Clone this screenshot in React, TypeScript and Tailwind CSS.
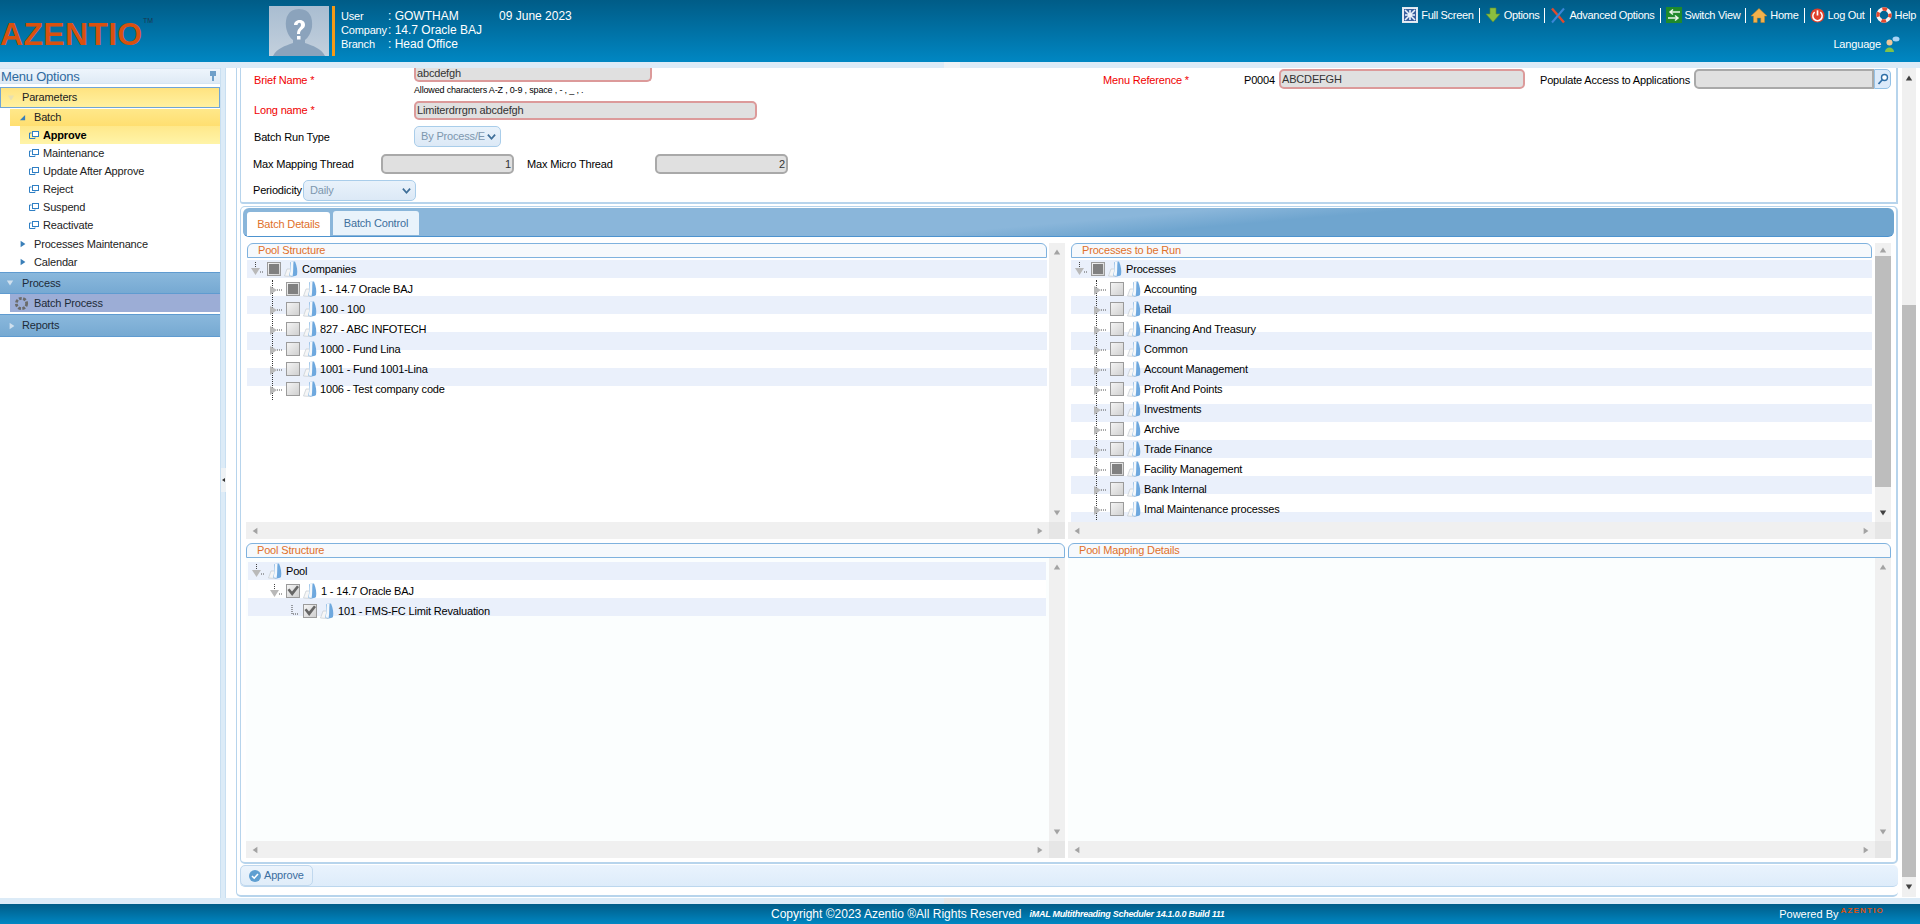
import React from "react";

const FONT = "font-['Liberation_Sans',Arial,sans-serif] tracking-[-0.17px]";
const STRIPES =
  "bg-[repeating-linear-gradient(to_bottom,#eaf0fb_0px,#eaf0fb_18px,#ffffff_18px,#ffffff_36px)]";

function Triangle({ dir, className }: { dir: "down" | "right" | "up" | "left"; className: string }) {
  const pts = {
    down: "1,2 9,2 5,8",
    right: "2,1 8,5 2,9",
    up: "1,8 9,8 5,2",
    left: "8,1 2,5 8,9",
  }[dir];
  return (
    <svg viewBox="0 0 10 10" className={className}>
      <polygon points={pts} fill="currentColor" />
    </svg>
  );
}

function DocIcon() {
  return (
    <svg viewBox="0 0 14 16" className="h-[16px] w-[14px] shrink-0">
      <path d="M0.5 15 L3 8 L8 8 L8 15.5 Z" fill="#f6f6f6" stroke="#c4ccd3" strokeWidth="0.7" />
      <path d="M5 14.5 C7 10 5.5 5 6.5 1 L11 0.5 C13 5 13.8 10 13 14 C10.5 15.8 7.5 15.8 5 14.5 Z" fill="#6ea8de" />
      <path d="M5.5 14.5 C7 10 6 5 7 1 L9.5 0.8 C9 6 9.5 11 8.6 15 Z" fill="#f4f8fc" />
    </svg>
  );
}

function CheckBox({ state }: { state: "none" | "partial" | "checked" }) {
  return (
    <span className="flex h-[14px] w-[14px] shrink-0 items-center justify-center border border-[#9b9b9b] bg-gradient-to-br from-[#f4f4f4] to-[#d0d0d0]">
      {state === "partial" && <span className="h-[10px] w-[10px] bg-[#808080]" />}
      {state === "checked" && (
        <svg viewBox="0 0 12 12" className="h-[12px] w-[12px]">
          <path d="M0.5 5 L2.5 3.5 L5 6.5 L10 0.5 L12 2 L5.2 11 Z" fill="#666666" />
        </svg>
      )}
    </span>
  );
}

function Expander({ open }: { open?: boolean }) {
  return (
    <svg viewBox="0 0 14 16" className="h-[16px] w-[14px] shrink-0">
      {open ? (
        <>
          <path d="M5.5 1 V8" stroke="#444" strokeWidth="1" strokeDasharray="1 1" />
          <polygon points="1,7 10,7 5.5,14" fill="#b9b9b9" />
          <path d="M10 11 H13" stroke="#555" strokeWidth="1" strokeDasharray="1 1" />
        </>
      ) : (
        <>
          <polygon points="1,5 8,9 1,14" fill="#b9b9b9" />
          <path d="M8 9 H13" stroke="#555" strokeWidth="1" strokeDasharray="1 1" />
        </>
      )}
    </svg>
  );
}

interface TreeRow {
  label: string;
  check?: "none" | "partial" | "checked";
}

function Tree({ root, rows, bandHeight }: { root: string; rows: TreeRow[]; bandHeight: string }) {
  return (
    <div className="min-h-0 flex-1 overflow-hidden text-[11px] text-black">
      <div className={`${STRIPES} ${bandHeight}`}>
        <div className="flex h-[20px] items-center gap-[3px] pb-[2px] pl-[3px] leading-none">
          <Expander open />
          <CheckBox state="partial" />
          <DocIcon />
          <span className="ml-px">{root}</span>
        </div>
        <div className="ml-[25px] border-l border-dotted border-[#333]">
          {rows.map((r) => (
            <div key={r.label} className="-ml-[4px] flex h-[20px] items-center gap-[3px] pb-[2px] leading-none">
              <Expander />
              <CheckBox state={r.check ?? "none"} />
              <DocIcon />
              <span className="whitespace-nowrap">{r.label}</span>
            </div>
          ))}
        </div>
      </div>
    </div>
  );
}

function PoolTree() {
  return (
    <div className={`h-[54px] ${STRIPES} text-[11px] text-black`}>
      <div className="flex h-[20px] items-center gap-[3px] pb-[2px] pl-[3px] leading-none">
        <Expander open />
        <DocIcon />
        <span className="ml-[1px]">Pool</span>
      </div>
      <div className="flex h-[20px] items-center gap-[3px] pb-[2px] pl-[21px] leading-none">
        <Expander open />
        <CheckBox state="checked" />
        <DocIcon />
        <span className="ml-[1px]">1 - 14.7 Oracle BAJ</span>
      </div>
      <div className="flex h-[20px] items-center gap-[3px] pb-[2px] pl-[43px] leading-none">
        <svg viewBox="0 0 9 14" className="h-[14px] w-[9px] shrink-0">
          <path d="M1 1 V10 H7" fill="none" stroke="#444" strokeWidth="1" strokeDasharray="1 1" />
        </svg>
        <CheckBox state="checked" />
        <DocIcon />
        <span className="ml-[1px] whitespace-nowrap">101 - FMS-FC Limit Revaluation</span>
      </div>
    </div>
  );
}

function Legend({ title, className }: { title: string; className?: string }) {
  return (
    <div className={`flex h-[15px] shrink-0 items-center rounded-t-[6px] border border-[#7fb2de] bg-[#f6f9fc] pl-[10px] text-[11px] leading-none text-[#e0702a] ${className ?? ""}`}>
      {title}
    </div>
  );
}

function VScroll() {
  return (
    <div className="flex h-full w-[16px] shrink-0 flex-col items-center justify-between bg-[#f0f0f0] py-[5px]">
      <Triangle dir="up" className="h-[8px] w-[8px] text-[#a3a3a3]" />
      <Triangle dir="down" className="h-[8px] w-[8px] text-[#a3a3a3]" />
    </div>
  );
}

function HScroll() {
  return (
    <div className="flex h-[17px] shrink-0">
      <div className="flex flex-1 items-center justify-between bg-[#f0f0f0] px-[5px]">
        <Triangle dir="left" className="h-[8px] w-[8px] text-[#a3a3a3]" />
        <Triangle dir="right" className="h-[8px] w-[8px] text-[#a3a3a3]" />
      </div>
      <div className="w-[16px] bg-[#e6e6e6]" />
    </div>
  );
}

function Field({ value, className, invalid, align }: { value?: string; className: string; invalid?: boolean; align?: string }) {
  return (
    <div
      className={`flex shrink-0 items-center overflow-hidden rounded-[5px] border-2 bg-[#e0e0e0] px-[1px] text-[11px] leading-none text-[#333] ${
        invalid ? "border-[#dc9a9a]" : "border-[#a9a9a9]"
      } ${align ?? ""} ${className}`}
    >
      {value}
    </div>
  );
}

function SelectBox({ value, className }: { value: string; className: string }) {
  return (
    <div className={`flex shrink-0 items-center justify-between rounded-[5px] border border-[#a9cdea] bg-gradient-to-b from-[#e9f2fb] to-[#dce9f6] pl-[6px] pr-[4px] text-[11px] leading-none text-[#7d97ae] ${className}`}>
      <span className="overflow-hidden whitespace-nowrap">{value}</span>
      <svg viewBox="0 0 10 10" className="h-[9px] w-[9px] shrink-0">
        <path d="M1 3 L5 7.5 L9 3" fill="none" stroke="#3f6f99" strokeWidth="2" />
      </svg>
    </div>
  );
}

function WinIcon() {
  return (
    <svg viewBox="0 0 10 10" className="h-[10px] w-[10px] shrink-0">
      <rect x="3.5" y="1.5" width="6" height="5" fill="#fff" stroke="#2f7fc4" />
      <path d="M2.5 3 H0.5 V8.5 H6 V7.5" fill="none" stroke="#2f7fc4" />
    </svg>
  );
}

function MenuLeaf({ label, active }: { label: string; active?: boolean }) {
  return (
    <div
      className={`ml-[20px] flex h-[18px] items-center gap-[4px] pl-[9px] text-[11px] leading-none ${
        active ? "bg-gradient-to-b from-[#ffe88a] to-[#fff4a8] font-bold text-black" : "text-[#222]"
      }`}
    >
      <WinIcon />
      {label}
    </div>
  );
}

function NavIcon({ name }: { name: string }) {
  if (name === "full")
    return (
      <svg viewBox="0 0 16 16" className="h-[16px] w-[16px]">
        <rect x="0.5" y="0.5" width="15" height="15" fill="#e8eef6" stroke="#dfe7ef" />
        <rect x="2" y="2" width="12" height="12" fill="#3a5f9e" />
        <path d="M3 3 L13 13 M13 3 L3 13 M8 3 V13 M3 8 H13" stroke="#eaf2fb" strokeWidth="1.6" />
      </svg>
    );
  if (name === "options")
    return (
      <svg viewBox="0 0 16 16" className="h-[16px] w-[16px]">
        <path d="M5 1 H11 V7 H15 L8 15 L1 7 H5 Z" fill="#8cbf3f" stroke="#5f8f2a" strokeWidth="0.6" />
      </svg>
    );
  if (name === "advanced")
    return (
      <svg viewBox="0 0 16 16" className="h-[17px] w-[16px]">
        <path d="M2 1 L14 15" stroke="#e24a2c" strokeWidth="2.4" />
        <path d="M14 1 L2 15" stroke="#3a86d8" strokeWidth="2" />
      </svg>
    );
  if (name === "switch")
    return (
      <svg viewBox="0 0 16 16" className="h-[16px] w-[16px]">
        <rect width="16" height="16" fill="#1f8a2c" />
        <path d="M4 5 H14 M7 2.5 L4 5 L7 7.5 M12 11 H2 M9 8.5 L12 11 L9 13.5" fill="none" stroke="#e8f5e8" strokeWidth="1.5" />
      </svg>
    );
  if (name === "home")
    return (
      <svg viewBox="0 0 16 16" className="h-[17px] w-[16px]">
        <path d="M8 1 L16 8.5 H13.5 V15 H9.8 V10.5 H6.2 V15 H2.5 V8.5 H0 Z" fill="#f2b14c" stroke="#c98524" strokeWidth="0.5" />
      </svg>
    );
  if (name === "logout")
    return (
      <svg viewBox="0 0 16 16" className="h-[15px] w-[15px]">
        <circle cx="8" cy="8" r="7.5" fill="#e0402a" />
        <path d="M5 4.5 A5 5 0 1 0 11 4.5" fill="none" stroke="#fff" strokeWidth="1.6" />
        <path d="M8 2.5 V8" stroke="#fff" strokeWidth="1.8" />
      </svg>
    );
  if (name === "help")
    return (
      <svg viewBox="0 0 16 16" className="h-[16px] w-[16px]">
        <circle cx="8" cy="8" r="6" fill="none" stroke="#f3f3f3" strokeWidth="3.4" />
        <circle cx="8" cy="8" r="6" fill="none" stroke="#e2492f" strokeWidth="3.4" strokeDasharray="4.7 4.7" strokeDashoffset="2.3" />
      </svg>
    );
  return null;
}

function NavLink({ icon, label, last }: { icon: string; label: string; last?: boolean }) {
  return (
    <div className="flex items-center">
      <NavIcon name={icon} />
      <span className="ml-[3px] text-[11px] leading-none tracking-[-0.3px] text-white">{label}</span>
      {!last && <span className="mx-[5px] h-[15px] w-px bg-white" />}
    </div>
  );
}

function Header() {
  return (
    <header className="flex h-[62px] shrink-0 bg-gradient-to-b from-[#005c87] to-[#0087c3]">
      <div className="relative mt-[17px] h-[34px] w-[269px] shrink-0">
        <span className="block text-[32px] font-bold leading-[34px] tracking-[0.3px] text-[#d9510f]">AZENTIO</span>
        <span className="absolute left-[143px] top-0 text-[7px] leading-none tracking-normal text-[#17384f]">TM</span>
      </div>
      <div className="mt-[6px] flex h-[50px] w-[60px] shrink-0 items-end justify-center overflow-hidden bg-gradient-to-b from-[#a9bdd1] to-[#c3d0dd]">
        <svg viewBox="0 0 60 50" className="h-[50px] w-[60px]">
          <path d="M30 3 C41 3 44 12 43 21 C42 27 39 32 36 34 V37 C44 40 52 42 56 50 H4 C8 42 16 40 24 37 V34 C21 32 18 27 17 21 C16 12 19 3 30 3 Z" fill="#8ba3bc" />
          <path d="M25 19 C25 13 36 12 36 19 C36 23 31 23 31 28 H28 C28 22 32 22 32 19 C32 16 29 16 28.5 19 Z" fill="#ffffff" />
          <rect x="28" y="30" width="3.5" height="3.5" fill="#ffffff" />
        </svg>
      </div>
      <div className="ml-[3px] mt-[6px] h-[50px] w-[3px] shrink-0 bg-[#f59a16]" />
      <div className="ml-[6px] mt-[9px] grid h-fit grid-cols-[47px_auto] text-white">
        <span className="text-[11px] leading-[14px]">User</span>
        <span className="text-[12px] leading-[14px] tracking-normal">: GOWTHAM</span>
        <span className="text-[11px] leading-[14px]">Company</span>
        <span className="text-[12px] leading-[14px] tracking-normal">: 14.7 Oracle BAJ</span>
        <span className="text-[11px] leading-[14px]">Branch</span>
        <span className="text-[12px] leading-[14px] tracking-normal">: Head Office</span>
      </div>
      <div className="ml-[17px] mt-[9px] text-[12px] leading-[14px] tracking-normal text-white">09 June 2023</div>
      <div className="ml-auto flex flex-col items-end pr-[4px] pt-[7px]">
        <div className="flex h-[16px] items-center">
          <NavLink icon="full" label="Full Screen" />
          <NavLink icon="options" label="Options" />
          <NavLink icon="advanced" label="Advanced Options" />
          <NavLink icon="switch" label="Switch View" />
          <NavLink icon="home" label="Home" />
          <NavLink icon="logout" label="Log Out" />
          <NavLink icon="help" label="Help" last />
        </div>
        <div className="mt-[13px] flex items-center pr-[16px] text-[11px] leading-none text-white">
          Language
          <svg viewBox="0 0 16 16" className="ml-[3px] h-[16px] w-[16px]">
            <circle cx="5.5" cy="6.5" r="3" fill="#f0c89a" />
            <path d="M1 16 C1 10 10 10 10 16 Z" fill="#7fc24a" />
            <ellipse cx="12" cy="3" rx="3.5" ry="2.5" fill="#a9d4f5" />
          </svg>
        </div>
      </div>
    </header>
  );
}

function Sidebar() {
  return (
    <aside className="flex w-[220px] shrink-0 flex-col bg-white">
      <div className="flex h-[16px] items-center justify-between border-y border-[#d5e5f3] bg-gradient-to-b from-[#eef5fc] to-[#dfeaf5] pl-[1px] pr-[3px]">
        <span className="text-[13px] leading-none tracking-[-0.2px] text-[#2f6a9f]">Menu Options</span>
        <svg viewBox="0 0 8 10" className="h-[10px] w-[8px]">
          <path d="M1 0 H7 V5 H5 V10 H3 V5 H1 Z" fill="#6f9fc9" />
        </svg>
      </div>
      <div className="mt-[3px] flex h-[21px] items-center border border-[#6fa5d6] bg-gradient-to-b from-[#ffe380] to-[#fff1a0] pl-[6px] text-[11px] leading-none text-[#222]">
        <Triangle dir="down" className="mr-[7px] h-[8px] w-[8px] text-[#e8e0b0]" />
        Parameters
      </div>
      <div className="ml-[10px] mt-px flex h-[17px] items-center bg-gradient-to-b from-[#ffe88a] to-[#ffdf70] pl-[9px] text-[11px] leading-none text-[#222]">
        <svg viewBox="0 0 8 8" className="mr-[8px] h-[7px] w-[7px]">
          <polygon points="1,7 7,7 7,1" fill="#3a7fb8" />
        </svg>
        Batch
      </div>
      <MenuLeaf label="Approve" active />
      <MenuLeaf label="Maintenance" />
      <MenuLeaf label="Update After Approve" />
      <MenuLeaf label="Reject" />
      <MenuLeaf label="Suspend" />
      <MenuLeaf label="Reactivate" />
      <div className="mt-px flex h-[18px] items-center pl-[19px] text-[11px] leading-none text-[#222]">
        <Triangle dir="right" className="mr-[7px] h-[8px] w-[8px] text-[#3a7fb8]" />
        Processes Maintenance
      </div>
      <div className="flex h-[18px] items-center pl-[19px] text-[11px] leading-none text-[#222]">
        <Triangle dir="right" className="mr-[7px] h-[8px] w-[8px] text-[#3a7fb8]" />
        Calendar
      </div>
      <div className="mt-px flex h-[22px] items-center border-y border-[#5f9bd0] bg-gradient-to-b from-[#8ab8dc] to-[#76a9d2] pl-[6px] text-[11px] leading-none text-[#1d2b38]">
        <Triangle dir="down" className="mr-[8px] h-[8px] w-[8px] text-[#cfe0ee]" />
        Process
      </div>
      <div className="ml-[10px] flex h-[18px] items-center gap-[5px] bg-[#9cadd6] pl-[4px] text-[11px] leading-none text-[#1d2b38]">
        <svg viewBox="0 0 16 16" className="h-[15px] w-[15px]">
          <circle cx="8" cy="8" r="5.5" fill="none" stroke="#6b6b6b" strokeWidth="3" strokeDasharray="3 1.5" />
        </svg>
        Batch Process
      </div>
      <div className="mt-[2px] flex h-[23px] items-center border-y border-[#5f9bd0] bg-gradient-to-b from-[#8ab8dc] to-[#76a9d2] pl-[8px] text-[11px] leading-none text-[#1d2b38]">
        <Triangle dir="right" className="mr-[6px] h-[8px] w-[8px] text-[#cfe0ee]" />
        Reports
      </div>
    </aside>
  );
}

function FormPanel() {
  return (
    <section className="h-[136px] shrink-0 overflow-hidden rounded-bl-[3px] border-b-2 border-l border-r-2 border-[#b7d4ec] bg-white text-[11px] leading-none text-black">
      <div className="flex h-[33px]">
        <div className="w-[13px] shrink-0" />
        <div className="w-[160px] shrink-0 pt-[7px] text-[#f00000]">Brief Name *</div>
        <div className="shrink-0">
          <Field value="abcdefgh" invalid className="h-[14px] w-[238px] rounded-t-none border-t-0 pb-[1px]" />
          <div className="mt-[3px] whitespace-nowrap text-[9px] leading-[10px]">Allowed characters A-Z , 0-9 , space , - , _ , .</div>
        </div>
        <div className="ml-[451px] w-[141px] shrink-0 pt-[7px] text-[#f00000]">Menu Reference *</div>
        <div className="w-[35px] shrink-0 pt-[7px]">P0004</div>
        <Field value="ABCDEFGH" invalid className="mt-px h-[20px] w-[246px]" />
        <div className="ml-[15px] w-[154px] shrink-0 whitespace-nowrap pt-[7px]">Populate Access to Applications</div>
        <Field className="mt-px h-[20px] w-[180px] rounded-r-none" />
        <div className="mt-px flex h-[20px] w-[17px] shrink-0 items-center justify-center rounded-r-[5px] border border-[#93c1e6] bg-[#dceafa]">
          <svg viewBox="0 0 12 12" className="h-[12px] w-[12px]">
            <circle cx="7.5" cy="4.5" r="3" fill="#fff" stroke="#2f6fa8" strokeWidth="1.4" />
            <path d="M5.5 6.5 L1.5 11" stroke="#2f6fa8" strokeWidth="1.8" />
          </svg>
        </div>
      </div>
      <div className="flex h-[19px] items-center">
        <div className="w-[13px] shrink-0" />
        <div className="w-[160px] shrink-0 text-[#f00000]">Long name *</div>
        <Field value="Limiterdrrgm abcdefgh" invalid className="h-[19px] w-[343px]" />
      </div>
      <div className="mt-[6px] flex h-[21px] items-center">
        <div className="w-[13px] shrink-0" />
        <div className="mt-[1px] w-[160px] shrink-0">Batch Run Type</div>
        <SelectBox value="By Process/E" className="h-[21px] w-[87px]" />
      </div>
      <div className="mt-[7px] flex h-[20px] items-center">
        <div className="w-[12px] shrink-0" />
        <div className="w-[128px] shrink-0">Max Mapping Thread</div>
        <Field value="1" align="justify-end" className="h-[20px] w-[133px]" />
        <div className="ml-[13px] w-[128px] shrink-0">Max Micro Thread</div>
        <Field value="2" align="justify-end" className="h-[20px] w-[133px]" />
      </div>
      <div className="mt-[6px] flex h-[21px] items-center">
        <div className="w-[12px] shrink-0" />
        <div className="w-[50px] shrink-0">Periodicity</div>
        <SelectBox value="Daily" className="h-[21px] w-[113px]" />
      </div>
    </section>
  );
}

function UpperPane({ title, tree, dark, className, inset }: { title: string; tree: React.ReactNode; dark?: boolean; className: string; inset: string }) {
  return (
    <div className={`flex h-[296px] shrink-0 flex-col ${className}`}>
      <div className="flex min-h-0 flex-1">
        <div className={`flex min-w-0 flex-1 flex-col ${inset}`}>
          <Legend title={title} className="mb-[2px]" />
          {tree}
        </div>
        {dark ? (
          <div className="flex h-full w-[16px] shrink-0 flex-col bg-[#f0f0f0]">
            <div className="flex h-[13px] items-center justify-center">
              <Triangle dir="up" className="h-[8px] w-[8px] text-[#a3a3a3]" />
            </div>
            <div className="h-[231px] bg-[#bdbdbd]" />
            <div className="flex flex-1 items-end justify-center pb-[5px]">
              <Triangle dir="down" className="h-[8px] w-[8px] text-[#404040]" />
            </div>
          </div>
        ) : (
          <VScroll />
        )}
      </div>
      <HScroll />
    </div>
  );
}

function LowerPane({ title, children, className }: { title: string; children?: React.ReactNode; className: string }) {
  return (
    <div className={`flex h-[315px] shrink-0 flex-col ${className}`}>
      <Legend title={title} />
      <div className="flex min-h-0 flex-1">
        <div className="min-w-0 flex-1 bg-[#fbfefe] pl-[2px] pr-[3px] pt-[4px]">{children}</div>
        <VScroll />
      </div>
      <HScroll />
    </div>
  );
}

function TabsPanel() {
  const companies: TreeRow[] = [
    { label: "1 - 14.7 Oracle BAJ", check: "partial" },
    { label: "100 - 100" },
    { label: "827 - ABC INFOTECH" },
    { label: "1000 - Fund Lina" },
    { label: "1001 - Fund 1001-Lina" },
    { label: "1006 - Test company code" },
  ];
  const processes: TreeRow[] = [
    { label: "Accounting" },
    { label: "Retail" },
    { label: "Financing And Treasury" },
    { label: "Common" },
    { label: "Account Management" },
    { label: "Profit And Points" },
    { label: "Investments" },
    { label: "Archive" },
    { label: "Trade Finance" },
    { label: "Facility Management", check: "partial" },
    { label: "Bank Internal" },
    { label: "Imal Maintenance processes" },
  ];
  return (
    <section className="mt-[2px] flex h-[658px] shrink-0 flex-col rounded-[5px] border-b-2 border-l border-r-2 border-t border-[#b7d4ec] bg-white">
      <div className="mx-[2px] mt-px flex h-[29px] shrink-0 items-end rounded-[6px] border-b border-[#4d93cf] bg-[linear-gradient(175deg,#8ab6da_0%,#8ab6da_50%,#6fa5cf_60%,#6fa5cf_100%)] pl-[4px]">
        <div className="flex h-[24px] w-[83px] items-center justify-center rounded-t-[3px] bg-white text-[11px] leading-none text-[#e0702a]">
          Batch Details
        </div>
        <div className="mb-px ml-[3px] flex h-[24px] w-[86px] items-center justify-center rounded-t-[3px] bg-[#e9f3fb] text-[11px] leading-none text-[#3d6f9c]">
          Batch Control
        </div>
      </div>
      <div className="mt-[6px] flex gap-[3px] pl-[5px]">
        <UpperPane
          title="Pool Structure"
          className="w-[819px]"
          inset="pl-[1px] pr-[2px]"
          tree={<Tree root="Companies" bandHeight="h-[126px]" rows={companies} />}
        />
        <UpperPane
          title="Processes to be Run"
          dark
          className="w-[823px]"
          inset="pl-[3px] pr-[3px]"
          tree={<Tree root="Processes" bandHeight="h-[280px]" rows={processes} />}
        />
      </div>
      <div className="mt-[4px] flex gap-[3px] pl-[5px]">
        <LowerPane title="Pool Structure" className="w-[819px]">
          <PoolTree />
        </LowerPane>
        <LowerPane title="Pool Mapping Details" className="w-[823px]" />
      </div>
    </section>
  );
}

export default function App() {
  return (
    <div className={`relative flex h-[924px] w-[1920px] flex-col overflow-hidden bg-white ${FONT}`}>
      <Header />
      <div className="relative h-[6px] shrink-0 bg-[#dcebf7]">
        <div className="absolute left-[944px] top-0 h-[6px] w-[16px] bg-[#eef2f5]" />
      </div>
      <div className="flex min-h-0 flex-1">
        <Sidebar />
        <div className="relative w-[6px] shrink-0 border-x border-[#c9dff1] bg-[#dcebf7]">
          <div className="absolute left-0 top-[400px] flex h-[24px] w-[5px] items-center justify-center bg-[#eef2f5]">
            <Triangle dir="left" className="h-[6px] w-[5px] text-[#333]" />
          </div>
        </div>
        <div className="ml-[10px] flex h-[829px] w-[1662px] shrink-0 flex-col rounded-b-[5px] border-b-2 border-l border-[#b7d4ec] pl-[3px]">
          <FormPanel />
          <TabsPanel />
          <div className="mt-[1px] flex h-[22px] shrink-0 rounded-[5px] border-b border-[#bcd7ee] bg-gradient-to-b from-[#e9f3fd] to-[#deecfa]">
            <div className="flex h-[21px] w-[73px] items-center gap-[3px] rounded-[5px] border border-[#c0d8ee] bg-gradient-to-b from-[#ecf4fc] to-[#e0edf9] pl-[8px] text-[11px] leading-none text-[#3b6ea0]">
              <svg viewBox="0 0 12 12" className="h-[12px] w-[12px]">
                <circle cx="6" cy="6" r="6" fill="#5f9fd1" />
                <path d="M3 6 L5.2 8.2 L9 4" fill="none" stroke="#fff" strokeWidth="1.6" />
              </svg>
              Approve
            </div>
          </div>
        </div>
        <div className="ml-[4px] flex h-[829px] w-[14px] shrink-0 flex-col bg-[#f0f0f0]">
          <div className="flex h-[20px] items-center justify-center">
            <Triangle dir="up" className="h-[8px] w-[8px] text-[#404040]" />
          </div>
          <div className="mt-[217px] flex-1 bg-[#bdbdbd]" />
          <div className="flex h-[20px] items-center justify-center">
            <Triangle dir="down" className="h-[8px] w-[8px] text-[#404040]" />
          </div>
        </div>
      </div>
      <div className="relative h-[6px] shrink-0 bg-[#dcebf7]">
        <div className="absolute left-[944px] top-0 h-[6px] w-[16px] bg-[#e6e6e6]" />
      </div>
      <footer className="flex h-[20px] shrink-0 items-center bg-gradient-to-b from-[#005c87] to-[#0087c3] tracking-normal text-white">
        <span className="ml-[771px] text-[12px] leading-none">Copyright ©2023 Azentio ®All Rights Reserved</span>
        <span className="ml-[8px] text-[9px] font-bold italic leading-none tracking-[-0.28px]">iMAL Multithreading Scheduler 14.1.0.0 Build 111</span>
        <span className="ml-auto text-[11px] leading-none">Powered By</span>
        <span className="-mt-[6px] ml-[2px] mr-[36px] text-[8px] font-bold leading-none tracking-[1.2px] text-[#d9510f]">AZENTIO</span>
      </footer>
    </div>
  );
}
